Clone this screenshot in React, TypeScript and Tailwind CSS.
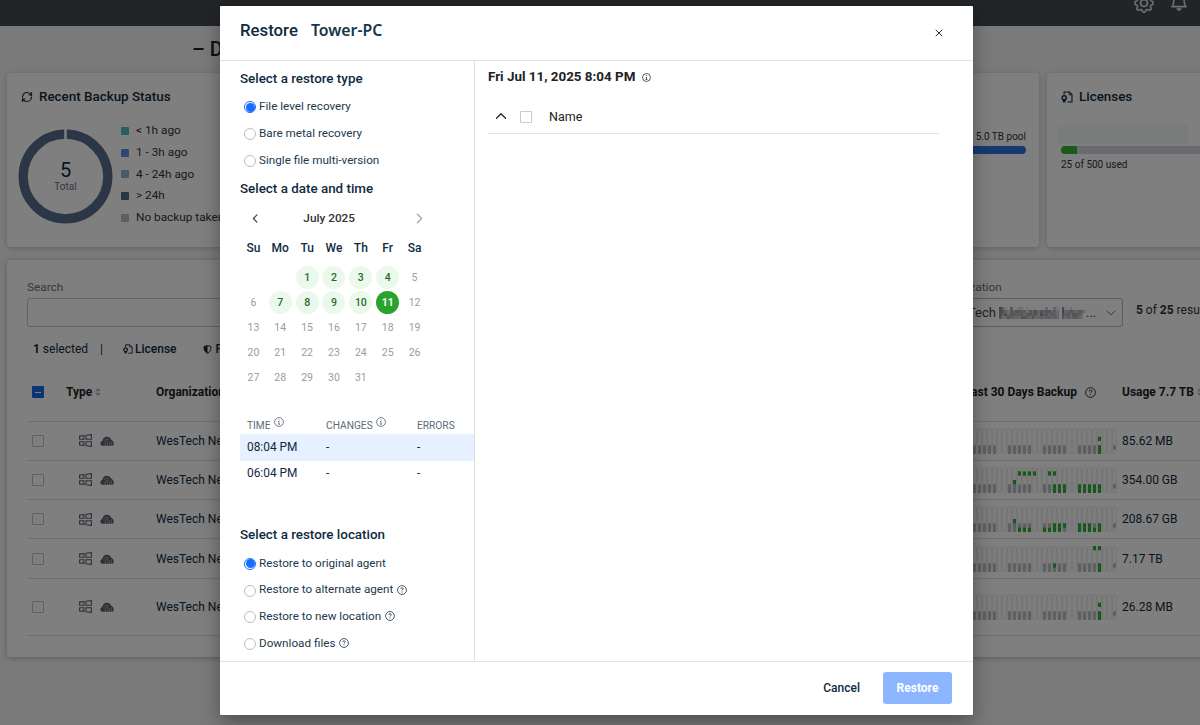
import { useState } from 'react';
import { ChevronDown, ChevronLeft, ChevronRight, ChevronUp, RefreshCw, X } from 'lucide-react';
import { BsBell, BsGear } from 'react-icons/bs';

const LEGEND = [
  { label: '< 1h ago', color: 'bg-[#4fc4b4]' },
  { label: '1 - 3h ago', color: 'bg-[#5b8fee]' },
  { label: '4 - 24h ago', color: 'bg-[#8db4dc]' },
  { label: '> 24h', color: 'bg-[#566a8c]' },
  { label: 'No backup taken', color: 'bg-[#bdbdbd]' },
];

// green cells are [day, slot], slot 0 is the top of the column
type Row = { usage: string; green: number[][]; tall?: boolean };

const ROWS: Row[] = [
  { usage: '85.62 MB', green: [[26, 2], [26, 4], [26, 5]] },
  {
    usage: '354.00 GB',
    green: [
      [9, 3], [10, 1], [11, 1], [12, 1], [13, 1], [16, 1], [17, 1],
      [17, 4], [17, 5], [18, 4], [18, 5], [19, 4], [19, 5],
      [22, 4], [22, 5], [23, 4], [23, 5], [24, 4], [24, 5], [25, 4], [25, 5], [26, 4], [26, 5],
    ],
  },
  {
    usage: '208.67 GB',
    green: [
      [9, 3], [10, 5], [11, 5], [12, 5], [15, 5], [16, 5],
      [17, 4], [17, 5], [18, 4], [18, 5], [19, 4],
      [22, 4], [22, 5], [23, 4], [23, 5], [24, 4], [24, 5], [25, 5], [26, 4], [26, 5],
    ],
  },
  { usage: '7.17 TB', green: [[17, 4], [25, 0], [26, 0], [26, 4], [26, 5]] },
  { usage: '26.28 MB', green: [[26, 2], [26, 4], [26, 5]], tall: true },
];

const RESTORE_TYPES = ['File level recovery', 'Bare metal recovery', 'Single file multi-version'];

const LOCATIONS = [
  { label: 'Restore to original agent', help: false },
  { label: 'Restore to alternate agent', help: true },
  { label: 'Restore to new location', help: true },
  { label: 'Download files', help: true },
];

const WEEKDAYS = ['Su', 'Mo', 'Tu', 'We', 'Th', 'Fr', 'Sa'];
const AVAILABLE = [1, 2, 3, 4, 7, 8, 9, 10];
const TIMES = ['08:04 PM', '06:04 PM'];

// redacted part of the organization name, darkness per block
const MOSAIC = [
  '74105002201000000300310710200000',
  '66425355442536354553420734543542',
  '64635544535545364535430645355430',
  '52354333554353343443430534345320',
];
const BLOCKS = ['#39424e', '#5c4a3c', '#34506c'];

function LicenseIcon({ className }: { className: string }) {
  return (
    <svg viewBox="0 0 14 14" className={className} fill="none" stroke="currentColor" strokeWidth="1.3">
      <path d="M3.6 4V1.2h6.2l3 3v8.6H7.5" />
      <path d="M9.5 1.4v3.1h3.1" strokeWidth="1" />
      <circle cx="3.7" cy="8" r="2.5" strokeWidth="1.7" />
      <path d="M2.2 10v3.6l1.5-.9 1.5.9V10z" fill="currentColor" stroke="none" />
    </svg>
  );
}

function WindowsIcon() {
  return (
    <svg viewBox="0 0 13 13" className="h-[13px] w-[13px]" fill="none" stroke="currentColor" strokeWidth="1.1">
      <path d="M.6 2.1 4.9 1.6v3.7H.6zM7 1.3l5.4-.7v4.7H7zM.6 7.7h4.3v3.7l-4.3-.5zM7 7.7h5.4v4.7L7 11.7z" />
    </svg>
  );
}

function CloudIcon() {
  return (
    <svg viewBox="0 0 14 10" className="h-[10px] w-[14px]">
      <path d="M2.3 9.7C.9 9.4.3 8.4.4 7.2.5 6 1.3 5.2 2.3 4.9 2.7 2.4 4.6.8 7 .8c2 0 3.5 1 4.3 2.900C12.900 4.500 13.800 5.800 13.800 7.600c0 .9-.3 1.600-.8 2.100z" fill="currentColor" />
      <path d="M5 9.700c-.1-2.600.6-4.100 2.300-4.100s2.300 1.600 2.300 4.100M7.300 7.500v2.200M4.200 5C5 3.600 7 2.900 9 3.800M11.300 5.500c.5 1.200.5 2.500.3 4.200" fill="none" stroke="#e3e4e6" strokeWidth=".55" />
    </svg>
  );
}

function InfoIcon({ className, mark }: { className: string; mark: 'i' | '?' }) {
  return (
    <svg viewBox="0 0 12 12" className={className} fill="none" stroke="currentColor" strokeWidth="1">
      <circle cx="6" cy="6" r="5.3" />
      {mark === 'i' ? (
        <path d="M6 2.900v1.100M4.900 5.400H6v3.200M4.700 8.600h2.600" />
      ) : (
        <path d="M4.500 4.800c0-1 .7-1.500 1.500-1.500s1.500.5 1.500 1.300c0 1-1.500 1-1.500 2.200M6 7.800v1.100" />
      )}
    </svg>
  );
}

function SortIcon() {
  return (
    <svg viewBox="0 0 6 8" className="h-2 w-1.5 fill-[#b4b4b4]">
      <path d="M3 0l3 3.200H0zM3 8l3-3.200H0z" />
    </svg>
  );
}

function BackupChart({ green }: { green: number[][] }) {
  const slot = 26 / 6;
  const days = Array.from({ length: 30 }, (_, i) => i);
  const isWeekday = (d: number) => d < 29 && d % 7 !== 0 && d % 7 !== 6;
  return (
    <svg viewBox="0 0 150 26" className="h-[26px] w-[150px] shrink-0">
      {days.map(d => (
        <g key={d}>
          <rect x={d * 5 - 0.25} y={0.5} width={3.5} height={25} rx={1.5} fill="none" stroke="#e4e4e4" strokeWidth=".9" />
          {isWeekday(d) && <rect x={d * 5} y={slot * 4} width={3} height={slot * 2} fill="#bbc0c6" />}
          {d === 29 && <rect x={d * 5} y={slot * 4} width={3} height={slot} fill="#bbc0c6" />}
        </g>
      ))}
      {green.map(([d, s]) => (
        <rect key={`${d}-${s}`} x={d * 5} y={s * slot} width={3} height={slot} fill="#2bb032" />
      ))}
    </svg>
  );
}

function Dashboard() {
  return (
    <div className="h-[725px] w-[1200px] overflow-hidden bg-[#f4f5f5] text-[#0f2b3f]">
      <header className="flex h-[26px] items-start justify-end gap-4 bg-[#444a51] pr-3 text-[#e4e4e4]">
        <BsGear className="-mt-[7px] h-5 w-5" stroke="currentColor" strokeWidth={0.35} />
        <BsBell className="-mt-[9px] h-[21px] w-[18px]" stroke="currentColor" strokeWidth={0.4} />
      </header>
      <div className="flex h-[45px] items-center pl-[192px]">
        <h1 className="text-[20px] leading-none font-medium text-[#17212b]">– Dashboard</h1>
      </div>

      <div className="mt-[2px] flex w-[1400px] gap-2 pl-[7px]">
        <section className="h-[174px] w-[508px] rounded-sm bg-white pt-[14px] pl-[14px] shadow-[0_1px_6px_rgba(0,0,0,0.2)]">
          <h2 className="flex h-5 items-center gap-[6px] text-[13.4px] font-medium">
            <RefreshCw className="h-3 w-3" strokeWidth={2.4} />
            Recent Backup Status
          </h2>
          <div className="mt-[13px] flex">
            <div className="relative mt-[9px] -ml-[3px] h-[95px] w-[95px]">
              <svg viewBox="0 0 95 95" className="h-full w-full">
                <circle cx="47.5" cy="47.5" r="42.3" fill="none" stroke="#566f8c" strokeWidth="9.3" />
                <path d="M47.5 0v11" stroke="#fff" strokeWidth="2.5" />
              </svg>
              <div className="absolute inset-0 flex flex-col items-center justify-center">
                <span className="text-[20px] leading-[19px]">5</span>
                <span className="text-[10px] leading-[13px] text-[#67727e]">Total</span>
              </div>
            </div>
            <ul className="ml-2 text-[11.8px] text-[#333]">
              {LEGEND.map(l => (
                <li key={l.label} className="flex h-[21.8px] items-center gap-[7px] whitespace-nowrap">
                  <span className={`h-2 w-2 rounded-[1px] ${l.color}`} />
                  {l.label}
                </li>
              ))}
            </ul>
          </div>
        </section>
        <section className="flex h-[174px] w-[516px] flex-col items-end rounded-sm bg-white pt-[55px] pr-[13px] text-[10px] text-[#333] shadow-[0_1px_6px_rgba(0,0,0,0.2)]">
          <p className="h-[18px] leading-[17px]">5.0 TB pool</p>
          <div className="h-2 w-[300px] rounded-full bg-[#2f72e4]" />
        </section>
        <section className="h-[174px] w-[340px] rounded-sm bg-white pt-[14px] pl-[14px] shadow-[0_1px_6px_rgba(0,0,0,0.2)]">
          <h2 className="flex h-5 items-center gap-[6px] text-[13.4px] font-medium">
            <LicenseIcon className="h-3 w-3" />
            Licenses
          </h2>
          <div className="mt-[18px] -ml-1 h-[19px] w-[131px] bg-[#f5f8f8]" />
          <div className="mt-[2px] h-2 w-[300px] overflow-hidden rounded-full bg-[#d3d7dc]">
            <div className="h-full w-4 bg-[#34b53a]" />
          </div>
          <p className="mt-[3px] text-[10px] leading-[16px] text-[#333]">25 of 500 used</p>
        </section>
      </div>

      <section className="mt-[13px] ml-[7px] h-[397px] w-[1400px] rounded-sm bg-white pt-[18px] pl-5 shadow-[0_1px_6px_rgba(0,0,0,0.25)]">
        <div className="flex">
          <div className="w-[906px]">
            <p className="h-5 text-[11.8px] leading-[19px] text-[#67727e]">Search</p>
            <div className="h-[29px] w-[600px] rounded-[3px] border border-[#c4c6c9]" />
          </div>
          <div className="w-[190px]">
            <p className="h-5 pl-[2px] text-[11.8px] leading-[19px] text-[#67727e]">Organization</p>
            <div className="flex h-[29px] items-center rounded-[3px] border border-[#b4b6b9] pr-[3px] text-[13px] text-[#444]">
              <span className="w-[65px] pl-[9px]">WesTech</span>
              <svg viewBox="0 0 32 4" preserveAspectRatio="none" className="h-[12px] w-[87px] shrink-0" shapeRendering="crispEdges">
                {MOSAIC.map((line, y) =>
                  line.split('').map((v, x) => (
                    <rect key={`${x}-${y}`} x={x} y={y} width={1} height={1} fill={BLOCKS[x % 3]} fillOpacity={Number(v) / 11} />
                  ))
                )}
              </svg>
              <span>...</span>
              <ChevronDown className="ml-auto h-4 w-4 text-[#777]" strokeWidth={1.5} />
            </div>
          </div>
          <p className="mt-[23px] ml-[13px] text-[12px] whitespace-nowrap text-[#333]">
            <b>5</b> of <b>25</b> results
          </p>
        </div>

        <div className="mt-[7px] mb-[8px] flex h-[30px] items-center pl-[6px] text-[12px]">
          <span><b>1</b> selected</span>
          <span className="ml-3">|</span>
          <span className="ml-5 flex items-center gap-0.5 font-medium"><LicenseIcon className="h-[10px] w-[10px]" />License</span>
          <span className="ml-[26px] flex items-center gap-1 font-medium">
            <svg viewBox="0 0 10 11" className="h-[9px] w-[9px]">
              <path d="M5 .6 9.3 2c0 4-1.200 6.600-4.300 8.200C1.900 8.600.7 6 .7 2z" fill="none" stroke="currentColor" strokeWidth="1.2" />
              <path d="M5 .6v9.600C1.900 8.600.7 6 .7 2z" fill="currentColor" />
            </svg>
            Policy
          </span>
        </div>

        <div className="flex h-[49.5px] items-start border-b border-[#dcdee0] text-[12px] font-bold text-[#222]">
          <span className="mt-[14px] ml-[5px] flex h-3 w-3 items-center justify-center rounded-[1px] bg-[#1769ea]">
            <span className="h-px w-1.5 bg-white" />
          </span>
          <span className="mt-[11px] ml-[22px] flex w-[90px] items-center gap-[3px]">Type <SortIcon /></span>
          <span className="mt-[11px] w-[785px]">Organization</span>
          <span className="mt-[11px] flex w-[181px] items-center gap-2 whitespace-nowrap">
            <span className="w-[136px] text-right">Last 30 Days Backup</span>
            <InfoIcon mark="?" className="h-[11px] w-[11px]" />
          </span>
          <span className="mt-[11px] flex items-center gap-[3px] whitespace-nowrap">Usage 7.7 TB <SortIcon /></span>
        </div>
        {ROWS.map(r => (
          <div
            key={r.usage}
            className={`flex items-center border-b border-[#dcdee0] text-[12px] ${r.tall ? 'h-[57.5px]' : 'h-[39.3px]'}`}
          >
            <span className="ml-[5px] h-3 w-3 rounded-[1px] border border-[#c0c2c5]" />
            <span className="ml-[35px] flex w-[77px] items-center gap-[8px] text-[#5b6470]"><WindowsIcon /><CloudIcon /></span>
            <span className="w-[812px]">WesTech Networks</span>
            <BackupChart green={r.green} />
            <span className="ml-1">{r.usage}</span>
          </div>
        ))}
      </section>
    </div>
  );
}

function Radio({ label, checked, help, onSelect }: { label: string; checked: boolean; help?: boolean; onSelect: () => void }) {
  return (
    <button onClick={onSelect} className="flex h-[26.8px] w-full items-center pl-[4px] text-[11.7px] text-[#23394d]">
      {checked ? (
        <span className="mt-px flex h-3 w-3 items-center justify-center rounded-full border border-[#1a6dff]">
          <span className="h-[9px] w-[9px] rounded-full bg-[#1a6dff]" />
        </span>
      ) : (
        <span className="mt-px h-3 w-3 rounded-full border-[1.5px] border-[#bdbdbd]" />
      )}
      <span className="ml-[3px]">{label}</span>
      {help && <InfoIcon mark="?" className="-mt-px ml-[4px] h-[10px] w-[10px]" />}
    </button>
  );
}

function Calendar({ day, onPick }: { day: number; onPick: (d: number) => void }) {
  return (
    <div className="mt-[9px] w-[188px]">
      <div className="flex h-5 items-center pl-[8px]">
        <ChevronLeft className="h-[17px] w-[17px] text-[#444]" strokeWidth={2} />
        <span className="ml-[41px] w-[52px] text-[11.8px] font-medium whitespace-nowrap text-[#333]">July 2025</span>
        <ChevronRight className="ml-[56px] h-[17px] w-[17px] shrink-0 text-[#aaa]" strokeWidth={2} />
      </div>
      <div className="mt-[10px] grid w-[188px] grid-cols-7 text-center text-[12px] leading-5 font-medium">
        {WEEKDAYS.map(w => <span key={w}>{w}</span>)}
      </div>
      <div className="mt-[7px] grid w-[188px] grid-cols-7 text-[10.5px]">
        <span className="col-span-2" />
        {Array.from({ length: 31 }, (_, i) => i + 1).map(d => (
          <button key={d} onClick={() => onPick(d)} className="flex h-[25px] items-center justify-center">
            <span
              className={`flex h-[23px] w-[23px] items-center justify-center rounded-full ${
                d === day
                  ? 'bg-[#28a42e] font-bold text-white'
                  : AVAILABLE.includes(d)
                    ? 'bg-[#ebf9ec] font-medium text-[#276b2c]'
                    : 'text-[#9c9c9c]'
              }`}
            >
              {d}
            </span>
          </button>
        ))}
      </div>
    </div>
  );
}

function RestoreDialog() {
  const [type, setType] = useState(0);
  const [location, setLocation] = useState(0);
  const [day, setDay] = useState(11);
  const [time, setTime] = useState(0);

  return (
    <div className="mt-[6px] ml-[220px] flex h-[708.5px] w-[752.5px] flex-col rounded-[1px] bg-white text-[#0f2b3f] shadow-[0_8px_20px_rgba(0,0,0,0.35)]">
      <div className="flex h-[55px] items-center border-b border-[#e2e3e4] pr-[28px] pb-[4px] pl-5">
        <h2 className="text-[16.8px] font-medium">Restore</h2>
        <span className="ml-[13px] font-['Noto_Sans',sans-serif] text-[15.8px] font-semibold text-[#17364a]">Tower-PC</span>
        <X className="mt-[4px] ml-auto h-3 w-3" strokeWidth={1.9} />
      </div>

      <div className="flex h-[601px] border-b border-[#e2e3e4]">
        <div className="w-[255px] border-r border-[#dfe1e3] pt-[8px] pl-5">
          <h3 className="h-5 text-[13.4px] leading-5 font-medium">Select a restore type</h3>
          <div className="mt-[4.5px]">
            {RESTORE_TYPES.map((t, i) => (
              <Radio key={t} label={t} checked={i === type} onSelect={() => setType(i)} />
            ))}
          </div>
          <h3 className="mt-[5.5px] h-5 text-[13.4px] leading-5 font-medium">Select a date and time</h3>
          <Calendar day={day} onPick={setDay} />

          <div className="mt-[26px] text-[11.9px]">
            <div className="flex h-[18px] items-center pl-[7px] text-[10.2px] text-[#5c6b78]">
              <span className="flex w-[79px] gap-[3px]">TIME <InfoIcon mark="i" className="-mt-px h-[10px] w-[10px]" /></span>
              <span className="flex w-[91px] gap-[3px]">CHANGES <InfoIcon mark="i" className="-mt-px h-[10px] w-[10px]" /></span>
              <span>ERRORS</span>
            </div>
            {TIMES.map((t, i) => (
              <button
                key={t}
                onClick={() => setTime(i)}
                className={`flex h-[26.5px] w-full items-center pl-[7px] text-left ${i === time ? 'bg-[#e7f0fe]' : ''}`}
              >
                <span className="w-[79px]">{t}</span>
                <span className="w-[91px]">-</span>
                <span>-</span>
              </button>
            ))}
          </div>

          <h3 className="mt-[37.6px] h-5 text-[13.4px] leading-5 font-medium">Select a restore location</h3>
          <div className="mt-[5px]">
            {LOCATIONS.map((l, i) => (
              <Radio key={l.label} label={l.label} help={l.help} checked={i === location} onSelect={() => setLocation(i)} />
            ))}
          </div>
        </div>

        <div className="flex-1 pt-[6px] pr-[34px] pl-[13px] text-[#222]">
          <h3 className="flex h-5 items-center gap-[7px] text-[13.4px] font-bold">
            Fri Jul 11, 2025 8:04 PM
            <InfoIcon mark="i" className="mt-px h-[9px] w-[9px]" />
          </h3>
          <div className="mt-[12px] flex h-[35px] items-center border-b border-[#dfe1e3] pt-px pl-[4px] text-[12.5px]">
            <ChevronUp className="-mt-px h-[18px] w-[18px]" strokeWidth={1.6} />
            <span className="ml-[10px] h-3 w-3 rounded-[1px] border border-[#c9cbcd]" />
            <span className="mt-px ml-[17px]">Name</span>
          </div>
        </div>
      </div>

      <div className="flex flex-1 items-center justify-end pr-[20.5px] text-[12px] font-medium">
        <button>Cancel</button>
        <button className="ml-[23px] h-8 w-[69px] rounded-[3px] bg-[#8cb6ff] font-bold text-white">Restore</button>
      </div>
    </div>
  );
}

export default function App() {
  return (
    <main className="relative h-[725px] w-[1200px] overflow-hidden font-['Roboto','Liberation_Sans',sans-serif]">
      <Dashboard />
      <div className="absolute inset-0 bg-black/50">
        <RestoreDialog />
      </div>
    </main>
  );
}
